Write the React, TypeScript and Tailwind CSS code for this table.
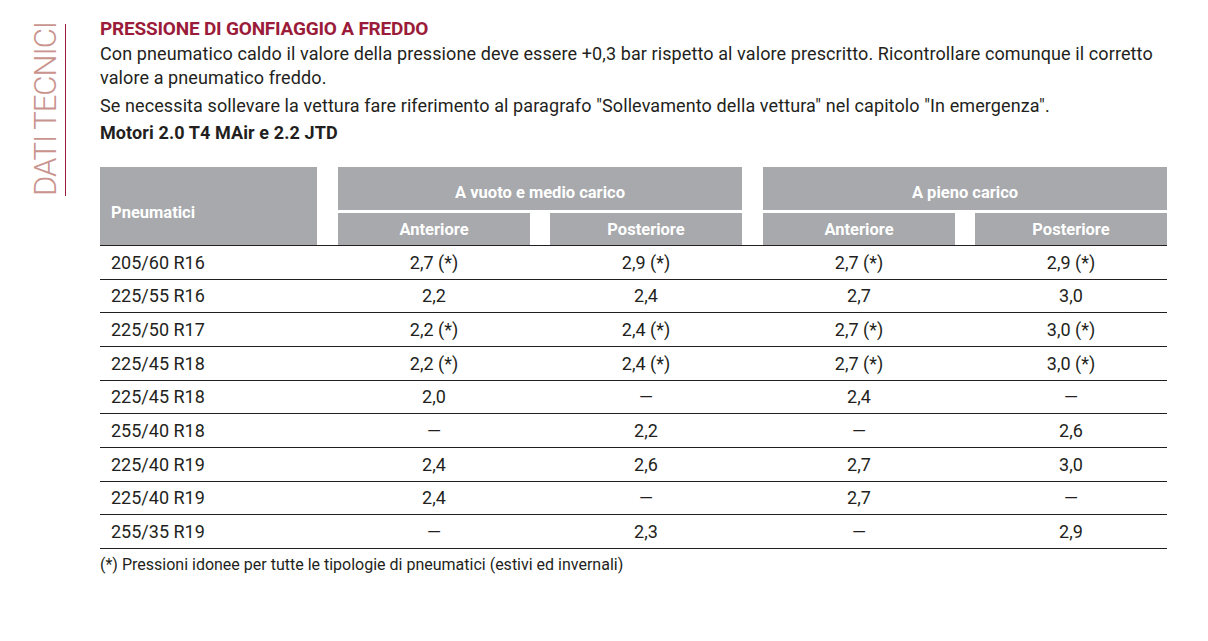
const rows: [string, string, string, string, string][] = [
  ["205/60 R16", "2,7 (*)", "2,9 (*)", "2,7 (*)", "2,9 (*)"],
  ["225/55 R16", "2,2", "2,4", "2,7", "3,0"],
  ["225/50 R17", "2,2 (*)", "2,4 (*)", "2,7 (*)", "3,0 (*)"],
  ["225/45 R18", "2,2 (*)", "2,4 (*)", "2,7 (*)", "3,0 (*)"],
  ["225/45 R18", "2,0", "—", "2,4", "—"],
  ["255/40 R18", "—", "2,2", "—", "2,6"],
  ["225/40 R19", "2,4", "2,6", "2,7", "3,0"],
  ["225/40 R19", "2,4", "—", "2,7", "—"],
  ["255/35 R19", "—", "2,3", "—", "2,9"],
];

export default function App() {
  return (
    <div className="flex h-[641px] w-[1208px] bg-white text-[#231f20] font-['Roboto',sans-serif]">
      {/* Side label */}
      <div className="flex w-[100px] shrink-0 pl-[31px] pt-[24px]">
        <div className="flex h-[172px] items-stretch">
          <span className="[writing-mode:vertical-rl] rotate-180 whitespace-nowrap text-center text-[31px] font-light leading-[30px] tracking-[-1px] text-[#c9938e]">
            DATI TECNICI
          </span>
          <div className="ml-[4px] w-px bg-[#9b1b3a]" />
        </div>
      </div>

      {/* Content */}
      <div className="flex w-[1067px] flex-col pt-[16px]">
        <h1 className="text-[19px] font-bold leading-[26px] tracking-[-0.2px] text-[#9b1b3a]">
          PRESSIONE DI GONFIAGGIO A FREDDO
        </h1>
        <p className="text-[18px] leading-[24px] tracking-[0.1px]">
          Con pneumatico caldo il valore della pressione deve essere +0,3 bar rispetto al valore prescritto. Ricontrollare comunque il corretto valore a pneumatico freddo.
        </p>
        <p className="mt-[4px] text-[18px] leading-[24px] tracking-[0.1px]">
          Se necessita sollevare la vettura fare riferimento al paragrafo "Sollevamento della vettura" nel capitolo "In emergenza".
        </p>
        <p className="mt-[3px] text-[18px] font-bold leading-[24px] tracking-[0.1px]">
          Motori 2.0 T4 MAir e 2.2 JTD
        </p>

        {/* Table */}
        <div className="mt-[22px] w-[1067px]">
          <div className="flex h-[79px] border-b border-[#231f20] text-[16.5px] font-bold leading-[20px] text-white">
            <div className="flex w-[217px] items-center bg-[#a7a9ac] pl-[11px] pt-[14px]">Pneumatici</div>
            <div className="w-[21px]" />
            <div className="flex w-[404px] flex-col">
              <div className="flex h-[43px] items-end justify-center bg-[#a7a9ac] pb-[7px]">A vuoto e medio carico</div>
              <div className="mt-[3px] flex flex-1">
                <div className="flex w-[192px] items-center justify-center bg-[#a7a9ac] pt-[2px]">Anteriore</div>
                <div className="w-[20px]" />
                <div className="flex w-[192px] items-center justify-center bg-[#a7a9ac] pt-[2px]">Posteriore</div>
              </div>
            </div>
            <div className="w-[21px]" />
            <div className="flex w-[404px] flex-col">
              <div className="flex h-[43px] items-end justify-center bg-[#a7a9ac] pb-[7px]">A pieno carico</div>
              <div className="mt-[3px] flex flex-1">
                <div className="flex w-[192px] items-center justify-center bg-[#a7a9ac] pt-[2px]">Anteriore</div>
                <div className="w-[20px]" />
                <div className="flex w-[192px] items-center justify-center bg-[#a7a9ac] pt-[2px]">Posteriore</div>
              </div>
            </div>
          </div>
          {rows.map((r, i) => (
            <div key={i} className="flex h-[33.67px] items-center border-b border-[#231f20] text-[18px]">
              <div className="w-[217px] pl-[11px]">{r[0]}</div>
              <div className="w-[21px]" />
              <div className="w-[192px] text-center">{r[1]}</div>
              <div className="w-[20px]" />
              <div className="w-[192px] text-center">{r[2]}</div>
              <div className="w-[21px]" />
              <div className="w-[192px] text-center">{r[3]}</div>
              <div className="w-[20px]" />
              <div className="w-[192px] text-center">{r[4]}</div>
            </div>
          ))}
        </div>
        <p className="mt-[4px] text-[16px] leading-[24px]">
          (*) Pressioni idonee per tutte le tipologie di pneumatici (estivi ed invernali)
        </p>
      </div>
    </div>
  );
}
